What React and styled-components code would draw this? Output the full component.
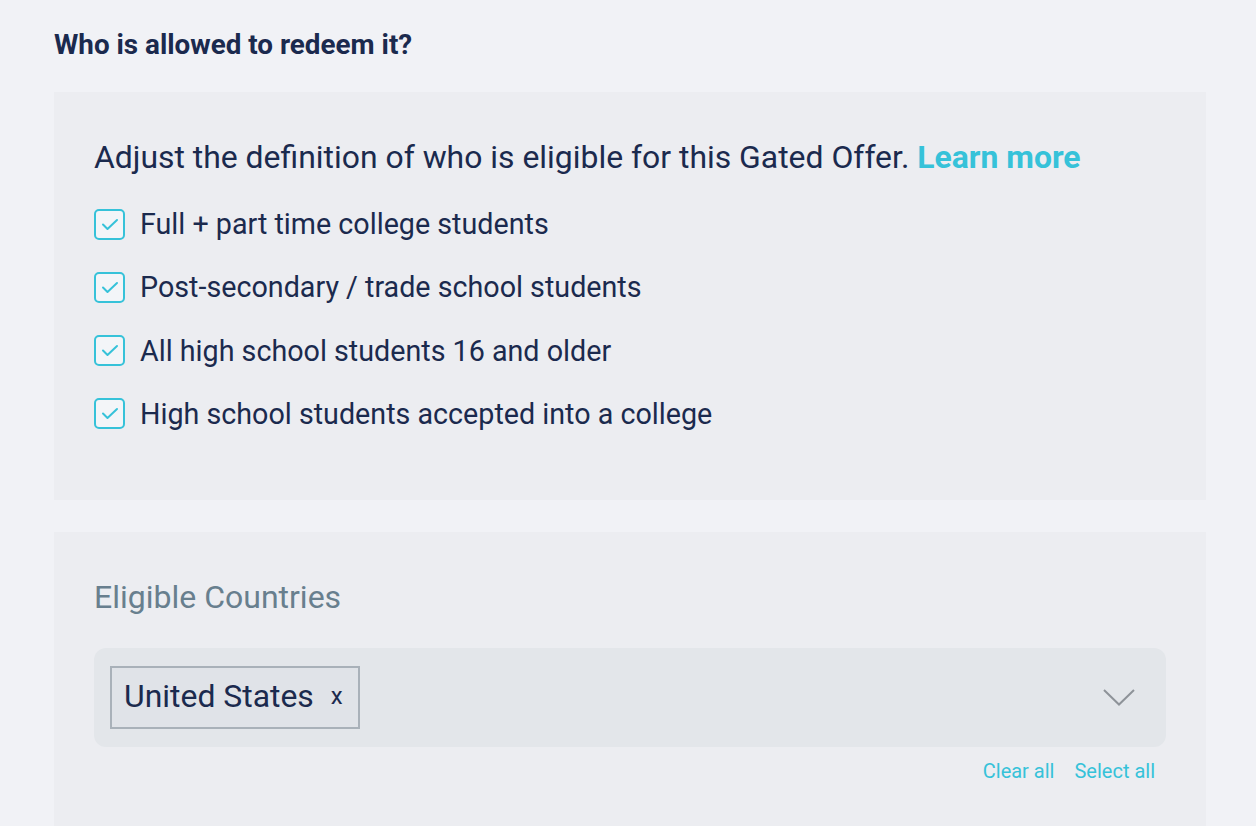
import React from 'react';
import styled, { createGlobalStyle } from 'styled-components';

const Global = createGlobalStyle`
	body {
		margin: 0;
		background: #f1f2f6;
		font-family: Roboto, 'Liberation Sans', sans-serif;
		color: #1b2a4e;
	}
`;

const Page = styled.div`
	padding: 30px 50px 0 54px;
	display: flex;
	flex-direction: column;
	height: 826px;
	box-sizing: border-box;
	overflow: hidden;
`;

const Heading = styled.h2`
	margin: 0 0 32px;
	font-size: 27.8px;
	font-weight: 700;
	line-height: 30px;
	color: #1b2a4e;
`;

const Panel = styled.section`
	background: #ecedf1;
	padding: ${p => p.pad || '40px'};
	margin-bottom: 32px;
	flex-shrink: 0;
`;

const Intro = styled.p`
	margin: 0 0 32px;
	font-size: 31.9px;
	line-height: 38px;
	color: #1b2a4e;
`;

const LearnMore = styled.a`
	color: #36c2d9;
	font-weight: 700;
	text-decoration: none;
	cursor: pointer;
`;

const List = styled.div`
	display: flex;
	flex-direction: column;
	gap: 31.3px;
`;

const Row = styled.label`
	display: flex;
	align-items: center;
	gap: 15px;
	font-size: 28.7px;
	line-height: 32px;
	cursor: pointer;
`;

const Box = styled.span`
	width: 31px;
	height: 31px;
	box-sizing: border-box;
	border: 2px solid #36c2d9;
	border-radius: 5px;
	background: #f3f5f8;
	display: flex;
	align-items: center;
	justify-content: center;
	flex-shrink: 0;
`;

const FieldLabel = styled.div`
	font-size: 32px;
	line-height: 38px;
	color: #687f8e;
	margin: 0 0 32px;
`;

const Select = styled.div`
	background: #e3e6ea;
	border-radius: 12px;
	height: 99px;
	display: flex;
	align-items: center;
	justify-content: space-between;
	padding: 0 31px 0 16px;
`;

const Chip = styled.span`
	display: inline-flex;
	align-items: center;
	gap: 17px;
	height: 63px;
	box-sizing: border-box;
	border: 2px solid #a9b1b9;
	background: #e0e3e8;
	padding: 0 15px 2px 12px;
	font-size: 31.9px;
	color: #1b2a4e;
`;

const ChipX = styled.span`
	font-size: 24px;
`;

const Actions = styled.div`
	display: flex;
	justify-content: flex-end;
	gap: 20px;
	padding: 12px 11px 0 0;
	line-height: 24px;
`;

const ActionLink = styled.a`
	font-size: 20px;
	color: #36c2d9;
	cursor: pointer;
`;

const Check = () => (
	<svg width="18" height="13" viewBox="0 0 18 13" fill="none">
		<path d="M2 6.5 L6.5 11 L16 2" stroke="#36c2d9" strokeWidth="2" strokeLinecap="round" strokeLinejoin="round" />
	</svg>
);

const Chevron = () => (
	<svg width="32" height="17" viewBox="0 0 32 17" fill="none">
		<path d="M1 1 L16 15.5 L31 1" stroke="#8e9399" strokeWidth="2" />
	</svg>
);

const groups = [
	'Full + part time college students',
	'Post-secondary / trade school students',
	'All high school students 16 and older',
	'High school students accepted into a college'
];

const App = () => (
	<>
		<Global />
		<Page>
			<Heading>Who is allowed to redeem it?</Heading>
			<Panel pad="46px 40px 70px">
				<Intro>
					Adjust the definition of who is eligible for this Gated Offer. <LearnMore>Learn more</LearnMore>
				</Intro>
				<List>
					{groups.map(g => (
						<Row key={g}>
							<Box>
								<Check />
							</Box>
							{g}
						</Row>
					))}
				</List>
			</Panel>
			<Panel pad="46px 40px 80px">
				<FieldLabel>Eligible Countries</FieldLabel>
				<Select>
					<Chip>
						United States <ChipX>x</ChipX>
					</Chip>
					<Chevron />
				</Select>
				<Actions>
					<ActionLink>Clear all</ActionLink>
					<ActionLink>Select all</ActionLink>
				</Actions>
			</Panel>
		</Page>
	</>
);

export default App;
